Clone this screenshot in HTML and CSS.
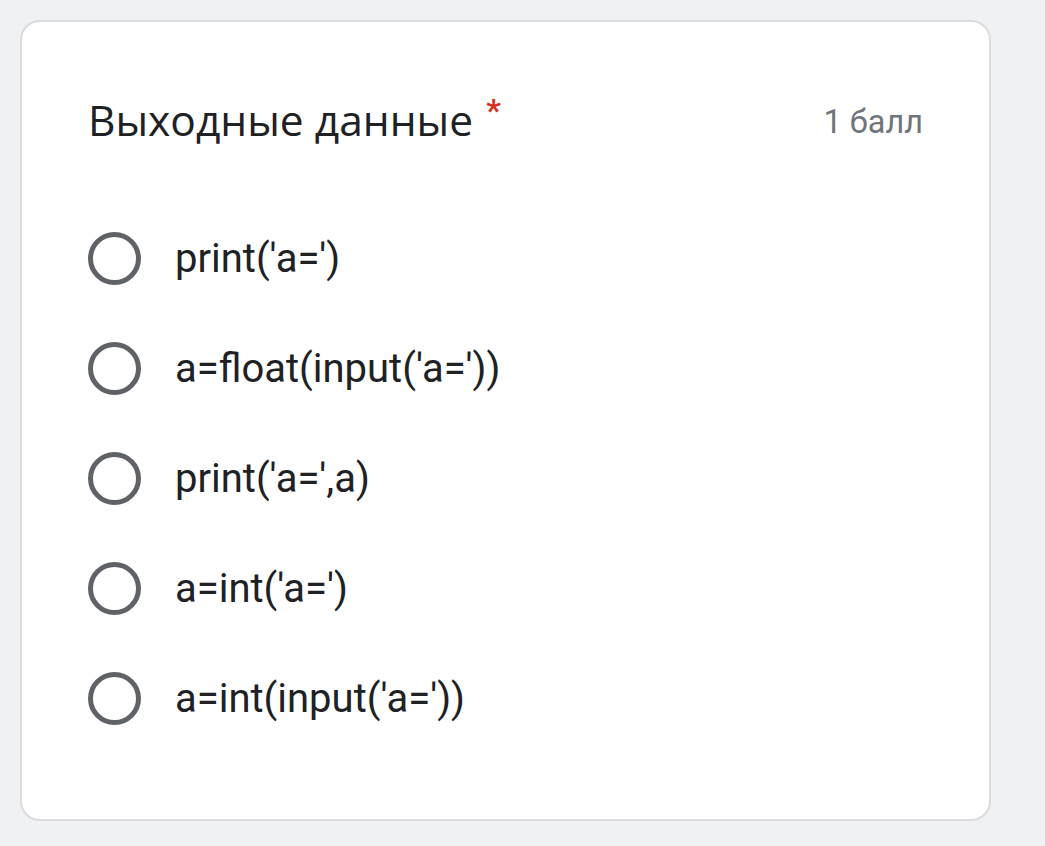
FILE: index.html
```html
<!DOCTYPE html>
<html lang="ru">
<head>
<meta charset="utf-8">
<link rel="stylesheet" href="styles.css">
</head>
<body>
<div class="card">
  <div class="header">
    <div class="title">Выходные данные<span class="req">*</span></div>
    <div class="points">1 балл</div>
  </div>
  <div class="options">
    <div class="option"><span class="radio"></span><span class="label">print('a=')</span></div>
    <div class="option"><span class="radio"></span><span class="label">a=float(input('a='))</span></div>
    <div class="option"><span class="radio"></span><span class="label">print('a=',a)</span></div>
    <div class="option"><span class="radio"></span><span class="label">a=int('a=')</span></div>
    <div class="option"><span class="radio"></span><span class="label">a=int(input('a='))</span></div>
  </div>
</div>
</body>
</html>
```
FILE: styles.css
```css
html, body {
  margin: 0;
  padding: 0;
  background: #f0f1f3;
}
body {
  padding: 20px 0 0 20px;
  width: 1045px;
  height: 846px;
  box-sizing: border-box;
  overflow: hidden;
}
.card {
  width: 971px;
  height: 801px;
  box-sizing: border-box;
  background: #fff;
  border: 2px solid #dadce0;
  border-radius: 20px;
  padding: 68px 66px 0 66px;
}
.header {
  display: flex;
  justify-content: space-between;
  align-items: baseline;
}
.title {
  font-family: "Open Sans", sans-serif;
  font-size: 42.5px;
  color: #202124;
  line-height: 60px;
}
.req {
  color: #d93025;
  margin-left: 13px;
  font-family: Roboto, sans-serif;
  font-weight: 700;
  font-size: 32px;
  vertical-align: top;
  line-height: 40px;
}
.points {
  font-family: Roboto, sans-serif;
  font-size: 32.5px;
  color: #70757a;
  position: relative;
  top: -3px;
}
.options {
  display: flex;
  flex-direction: column;
  margin-top: 53px;
}
.option {
  display: flex;
  align-items: center;
  height: 110px;
}
.radio {
  width: 43px;
  height: 43px;
  border: 5.5px solid #5f6368;
  border-radius: 50%;
  flex: none;
}
.label {
  font-family: Roboto, sans-serif;
  font-size: 40px;
  color: #202124;
  margin-left: 34px;
}
```
